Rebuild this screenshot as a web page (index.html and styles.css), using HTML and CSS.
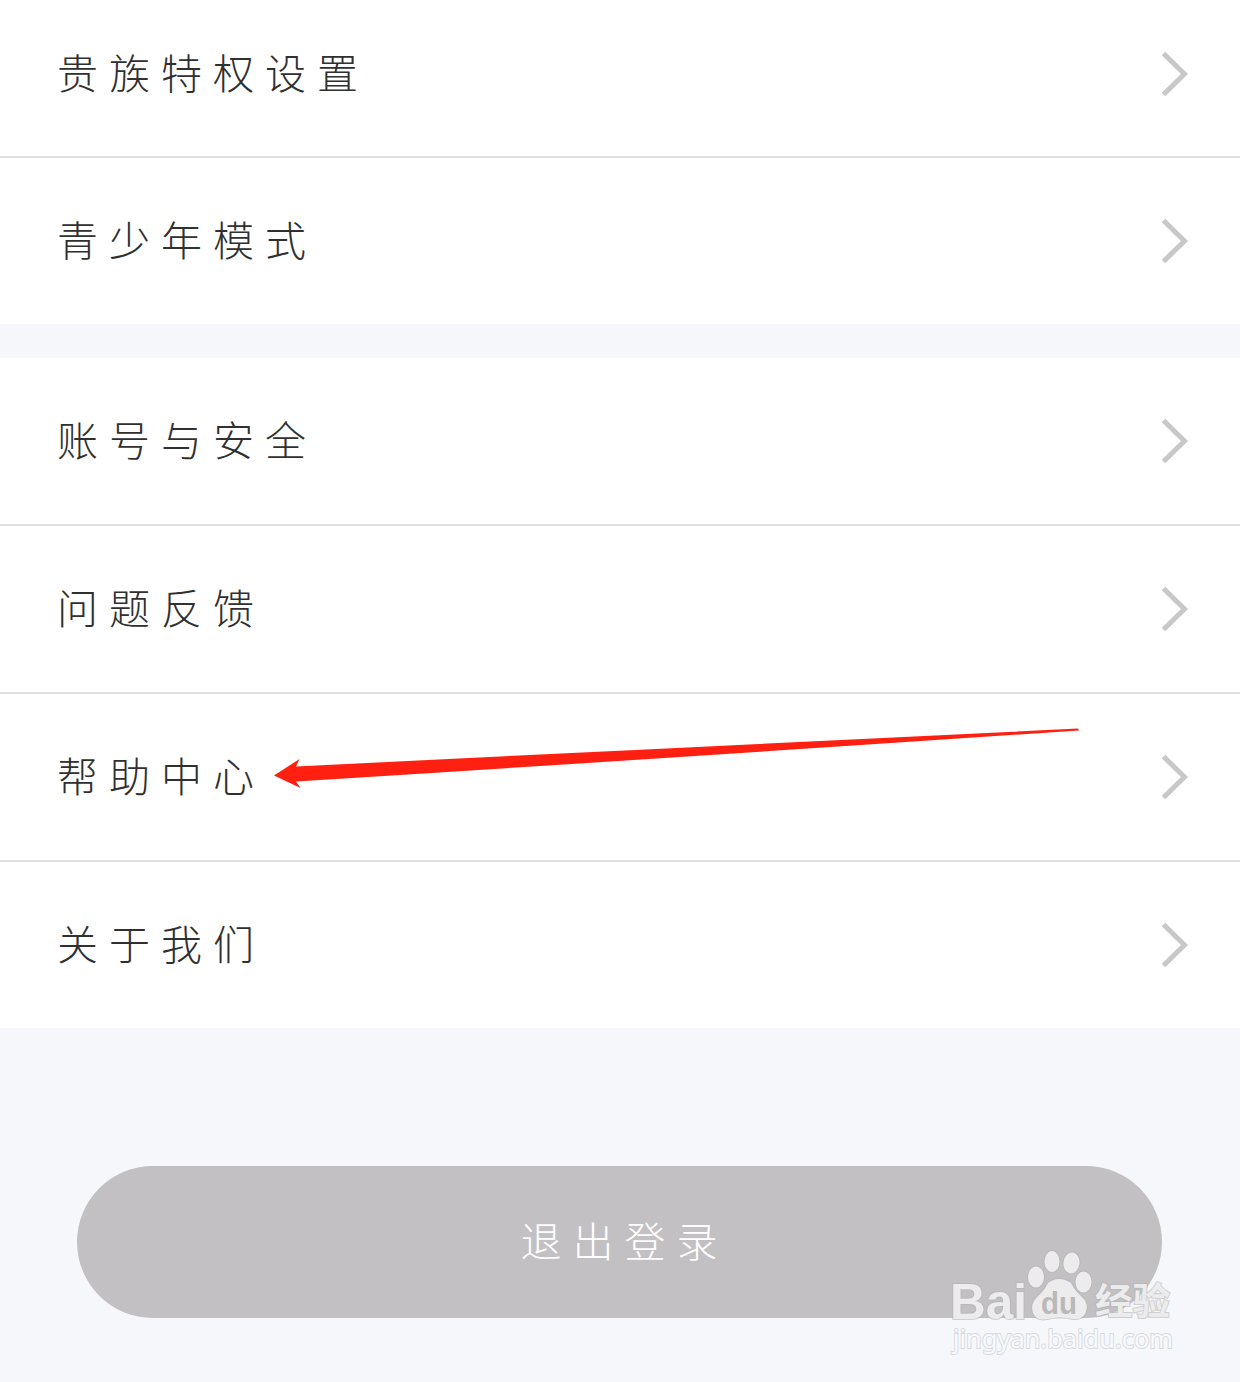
FILE: index.html
```html
<!DOCTYPE html>
<html lang="zh-CN">
<head>
<meta charset="utf-8">
<title>设置</title>
<link rel="stylesheet" href="styles.css">
</head>
<body>
<svg class="defs" width="0" height="0"><symbol id="chevron" viewBox="0 0 30 48"><path d="M3.500 3.500L24.500 24L3.500 44.500" fill="none" stroke="#c8c8c8" stroke-width="5"/></symbol></svg>
<main class="screen">
  <section class="group">
    <a class="row row-first"><span>贵族特权设置</span><svg class="chevron"><use href="#chevron"/></svg></a>
    <a class="row"><span>青少年模式</span><svg class="chevron"><use href="#chevron"/></svg></a>
  </section>
  <section class="group">
    <a class="row"><span>账号与安全</span><svg class="chevron"><use href="#chevron"/></svg></a>
    <a class="row"><span>问题反馈</span><svg class="chevron"><use href="#chevron"/></svg></a>
    <a class="row"><span>帮助中心</span><svg class="chevron"><use href="#chevron"/></svg></a>
    <a class="row"><span>关于我们</span><svg class="chevron"><use href="#chevron"/></svg></a>
  </section>
  <button class="logout">退出登录</button>
  <svg class="pointer" viewBox="0 0 810 64"><path d="M2 35.500L27.500 19L24 26.500Q400 8 806 -11.500L807 -9.500Q400 18 24 41.500L28.500 48Z" transform="translate(0 12)" fill="#ff2012"/></svg>
  <svg class="watermark" viewBox="0 0 240 120">
    <g class="mark">
      <text class="latin" x="10" y="78.500" font-size="50" textLength="77" lengthAdjust="spacingAndGlyphs">Bai</text>
      <ellipse cx="96" cy="37" rx="8" ry="10.500"/>
      <ellipse cx="112" cy="21.500" rx="7.500" ry="10.500"/>
      <ellipse cx="131.500" cy="23" rx="8" ry="10.500" transform="rotate(8 131.500 23)"/>
      <ellipse cx="143.500" cy="42" rx="8" ry="10.500"/>
      <path d="M108 43Q119 35 131 43Q135 51 141 56Q149 63 146 72Q143 80 133 79Q120 76 107 79Q96 81 93 73Q90 64 97 57Q104 51 108 43Z"/>
      <text class="du" x="101" y="73.500" font-size="31" textLength="36" lengthAdjust="spacingAndGlyphs">du</text>
      <text class="chinese" x="155" y="75" font-size="37" textLength="75" lengthAdjust="spacingAndGlyphs">经验</text>
      <text class="url" x="13" y="108" font-size="26" textLength="220" lengthAdjust="spacingAndGlyphs">jingyan.baidu.com</text>
    </g>
  </svg>
</main>
</body>
</html>
```
FILE: styles.css
```css
* { box-sizing: border-box; }
body { margin: 0; background: #f5f7fb; }
.defs { display: none; }
.screen {
  position: relative;
  display: flex;
  flex-direction: column;
  height: 1382px;
  overflow: hidden;
  font-family: "Noto Sans CJK SC", sans-serif;
}
.group { background: #fff; }
.group + .group { margin-top: 34px; }
.row {
  display: flex;
  align-items: center;
  justify-content: space-between;
  height: 166px;
  padding: 0 50px 0 57px;
  color: #303030;
  font-size: 41px;
  font-weight: 300;
  letter-spacing: 11px;
  line-height: 60px;
}
.row span { padding-bottom: 6px; }
.row + .row { height: 168px; border-top: 2px solid #e0e0e0; }
.row-first { height: 156px; padding-bottom: 8px; }
.chevron { width: 30px; height: 48px; }
.logout {
  width: 1085px;
  height: 152px;
  margin: 138px 0 0 77px;
  padding: 0 0 6px 10px;
  border: 0;
  border-radius: 76px;
  background: #c2c0c3;
  color: #fff;
  font: 300 41px/60px "Noto Sans CJK SC", sans-serif;
  letter-spacing: 11px;
}
.pointer {
  position: absolute;
  left: 272px;
  top: 728px;
  width: 810px;
  height: 64px;
}
.watermark {
  position: absolute;
  left: 940px;
  top: 1240px;
  width: 240px;
  height: 120px;
}
.mark {
  fill: #ececec;
  stroke: #b4b3b6;
  stroke-opacity: 0.6;
  stroke-width: 2px;
  paint-order: stroke;
}
.latin, .du { font-family: "Liberation Sans", sans-serif; font-weight: 700; }
.du { fill: #b9b8bb; stroke: none; }
.chinese { font-family: "Noto Sans CJK SC", sans-serif; font-weight: 700; }
.url { font-family: "Noto Sans", sans-serif; fill: #f8f9fc; stroke: #c4c5cb; }
```
